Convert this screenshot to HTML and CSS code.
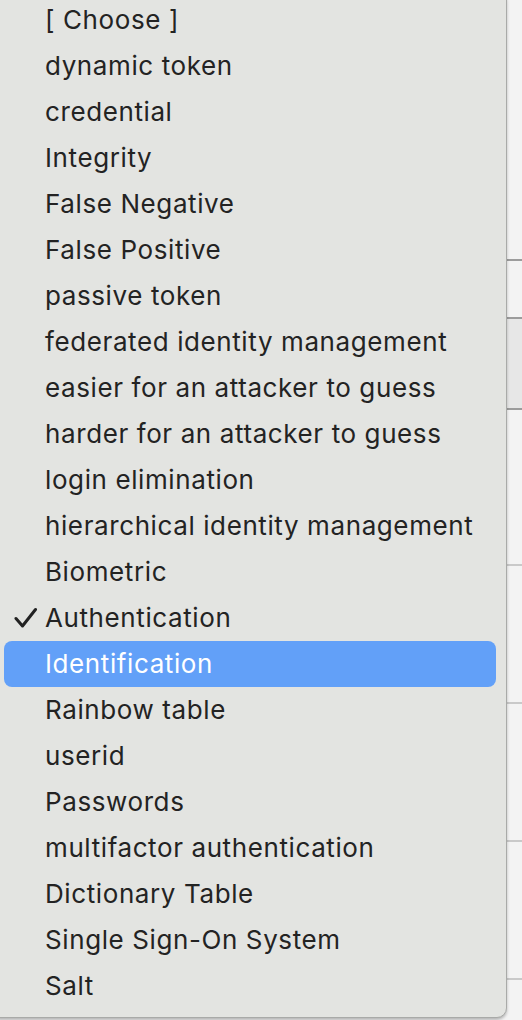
FILE: index.html
```html
<!DOCTYPE html>
<html>
<head>
<meta charset="utf-8">
<link rel="stylesheet" href="styles.css">
</head>
<body>
<div class="page">
  <div class="band b1"></div>
  <div class="band b2"></div>
  <div class="band b3 shade"></div>
  <div class="band b4"></div>
  <div class="band b5"></div>
  <div class="band b6"></div>
  <div class="band b7"></div>
  <div class="band b8"></div>
</div>
<div class="menu">
  <ul class="list">
    <li class="item">[ Choose ]</li>
    <li class="item">dynamic token</li>
    <li class="item">credential</li>
    <li class="item">Integrity</li>
    <li class="item">False Negative</li>
    <li class="item">False Positive</li>
    <li class="item">passive token</li>
    <li class="item">federated identity management</li>
    <li class="item">easier for an attacker to guess</li>
    <li class="item">harder for an attacker to guess</li>
    <li class="item">login elimination</li>
    <li class="item">hierarchical identity management</li>
    <li class="item">Biometric</li>
    <li class="item checked"><svg class="check" viewBox="0 0 24 22" width="24" height="22"><path d="M2 11.5 L8.5 19 L21.5 2.5" fill="none" stroke="#222" stroke-width="3" stroke-linecap="round" stroke-linejoin="round"/></svg>Authentication</li>
    <li class="item active">Identification</li>
    <li class="item">Rainbow table</li>
    <li class="item">userid</li>
    <li class="item">Passwords</li>
    <li class="item">multifactor authentication</li>
    <li class="item">Dictionary Table</li>
    <li class="item">Single Sign-On System</li>
    <li class="item">Salt</li>
  </ul>
</div>
</body>
</html>
```
FILE: styles.css
```css
html, body {
  margin: 0;
  padding: 0;
}
body {
  width: 522px;
  height: 1020px;
  overflow: hidden;
  background: #f3f3f3;
  position: relative;
  font-family: Inter, "Noto Sans", sans-serif;
}
.page {
  display: flex;
  flex-direction: column;
}
.band {
  background: #f3f3f3;
  border-bottom: 2px solid #c9c9c9;
}
.b1 { height: 259px; border-bottom-color: #9c9c9c; }
.b2 { height: 56px; border-bottom-color: #9c9c9c; }
.b3 { height: 89px; border-bottom-color: #9c9c9c; }
.b4 { height: 154px; }
.b5 { height: 136px; }
.b6 { height: 136px; }
.b7 { height: 136px; }
.b8 { height: 40px; border-bottom: 0; }
.shade { background: #e7e7e7; }

.menu {
  position: absolute;
  left: -10px;
  top: -10px;
  width: 517px;
  height: 1028px;
  background: #e3e4e1;
  border: 1px solid #a9aaa8;
  border-radius: 10px;
  box-shadow: 0 2px 3px rgba(0,0,0,0.25);
  box-sizing: border-box;
  overflow: hidden;
}
.list {
  list-style: none;
  margin: 0;
  padding: 6px 10px 0 13px;
}
.item {
  position: relative;
  height: 46px;
  line-height: 46px;
  padding-left: 41px;
  font-size: 26px;
  letter-spacing: 0.6px;
  color: #232323;
  border-radius: 8px;
  white-space: nowrap;
}
.item.active {
  background: #62a0f8;
  color: #ffffff;
}
.check {
  position: absolute;
  left: 10px;
  top: 12px;
}
```
